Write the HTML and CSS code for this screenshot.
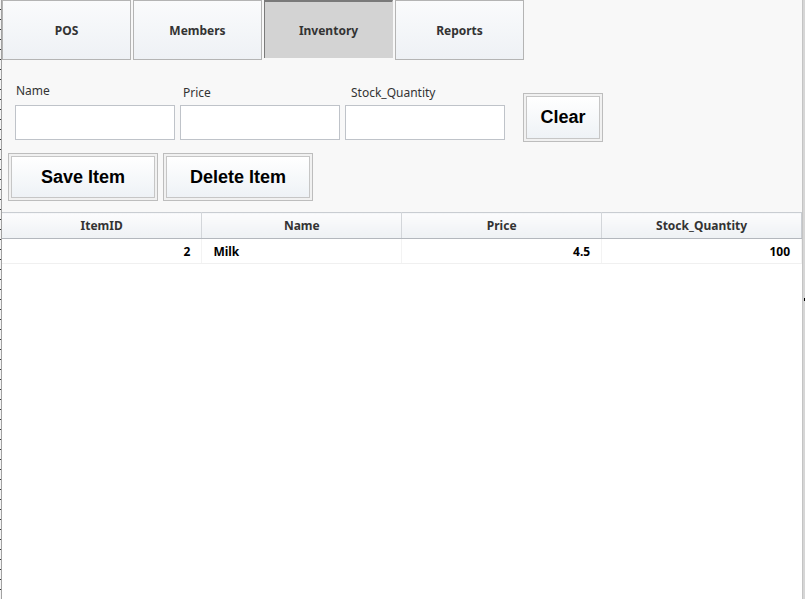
FILE: index.html
```html
<!DOCTYPE html>
<html>
<head>
<meta charset="utf-8">
<link rel="stylesheet" href="styles.css">
</head>
<body>
<div class="frame">
  <div class="ruler"></div>
  <div class="app">
    <nav class="tabs">
      <div class="tab">POS</div>
      <div class="tab">Members</div>
      <div class="tab tab-active">Inventory</div>
      <div class="tab">Reports</div>
    </nav>
    <section class="form">
      <div class="fields">
        <div class="field field-name">
          <label class="label">Name</label>
          <input class="input" type="text">
        </div>
        <div class="field field-low field-price">
          <label class="label">Price</label>
          <input class="input" type="text">
        </div>
        <div class="field field-low field-stock">
          <label class="label">Stock_Quantity</label>
          <input class="input" type="text">
        </div>
        <button class="btn btn-clear"><span class="btn-inner">Clear</span></button>
      </div>
      <div class="actions">
        <button class="btn btn-action"><span class="btn-inner">Save Item</span></button>
        <button class="btn btn-action"><span class="btn-inner">Delete Item</span></button>
      </div>
    </section>
    <div class="table-wrap">
      <table class="grid">
        <thead>
          <tr><th>ItemID</th><th>Name</th><th>Price</th><th>Stock_Quantity</th></tr>
        </thead>
        <tbody>
          <tr><td class="num">2</td><td>Milk</td><td class="num">4.5</td><td class="num">100</td></tr>
        </tbody>
      </table>
    </div>
  </div>
  <div class="edge"><span class="edge-mark"></span></div>
</div>
</body>
</html>
```
FILE: styles.css
```css
html, body {
  margin: 0;
  padding: 0;
}
body {
  background: #f8f8f8;
  font-family: "Noto Sans", "Open Sans", sans-serif;
  overflow: hidden;
}
.frame {
  display: flex;
  width: 805px;
  height: 599px;
}
.ruler {
  width: 2px;
  flex: none;
  background:
    linear-gradient(to right, transparent 1px, #a2a2a2 1px),
    repeating-linear-gradient(to bottom, #f4f4f4 0 9px, #333 9px 10px);
}
.app {
  width: 800px;
  flex: none;
  display: flex;
  flex-direction: column;
  background: #f8f8f8;
}
.tabs {
  display: flex;
  gap: 2px;
  height: 60px;
}
.tab {
  width: 127px;
  height: 58px;
  border: 1px solid #b4b4b4;
  background: linear-gradient(#fafbfc, #eef1f5);
  display: flex;
  align-items: center;
  justify-content: center;
  font-weight: bold;
  font-size: 12px;
  color: #333;
}
.tab-active {
  height: 56px;
  background: #d3d3d3;
  border: none;
  border-top: 2px solid #7a7a7a;
  border-left: 1px solid #7a7a7a;
  border-right: 1px solid #d3d3d3;
}
.form {
  padding: 22px 0 0 6px;
}
.fields {
  display: flex;
  align-items: flex-start;
  gap: 5px;
  padding-left: 7px;
}
.field {
  display: flex;
  flex-direction: column;
  padding-top: 1px;
  gap: 6px;
}
.field-low {
  padding-top: 3px;
  gap: 4px;
}
.field-name .label {
  padding-left: 1px;
}
.field-price .label {
  padding-left: 3px;
}
.field-stock .label {
  padding-left: 6px;
}
.label {
  font-size: 12px;
  line-height: 16px;
  color: #333;
}
.input {
  box-sizing: border-box;
  width: 160px;
  height: 35px;
  margin: 0;
  border: 1px solid #bfc3c9;
  background: #fff;
  padding: 0 4px;
}
.btn {
  box-sizing: border-box;
  margin: 0;
  padding: 2px;
  border: 1px solid #bdbdbd;
  background: #f1f1f1;
  display: flex;
  cursor: default;
}
.btn-inner {
  flex: 1;
  display: flex;
  align-items: center;
  justify-content: center;
  border: 1px solid #c6c6c6;
  background: linear-gradient(#ffffff, #eef2f6);
  font-family: "Liberation Sans", Arial, sans-serif;
  font-weight: bold;
  font-size: 18px;
  color: #000;
}
.btn-clear {
  width: 80px;
  height: 49px;
  margin-left: 13px;
  margin-top: 11px;
}
.actions {
  display: flex;
  gap: 5px;
  margin-top: 11px;
}
.btn-action {
  width: 150px;
  height: 48px;
}
.table-wrap {
  flex: 1;
  margin-top: 11px;
  background: #fff;
}
.grid {
  width: 800px;
  border-collapse: collapse;
  table-layout: fixed;
  font-size: 12px;
}
.grid th {
  height: 25px;
  padding: 0;
  font-weight: bold;
  color: #333;
  background: linear-gradient(#fcfcfd, #eef1f4);
  border-top: 1px solid #c9cdd2;
  border-bottom: 1px solid #b3b7bd;
  border-right: 1px solid #d3d6da;
}
.grid th:last-child {
  border-right: 1px solid #c9cdd2;
}
.grid td {
  height: 24px;
  padding: 0 11px;
  font-weight: bold;
  color: #000;
  border-bottom: 1px solid #f0f0f0;
  border-right: 1px solid #f3f3f3;
}
.grid td.num {
  text-align: right;
}
.edge {
  flex: 1;
  background: #d6d6d6;
  border-left: 1px solid #c4c4c4;
  display: flex;
  align-items: center;
}
.edge-mark {
  width: 2px;
  height: 3px;
  margin-left: 1px;
  background: #000;
}
```
